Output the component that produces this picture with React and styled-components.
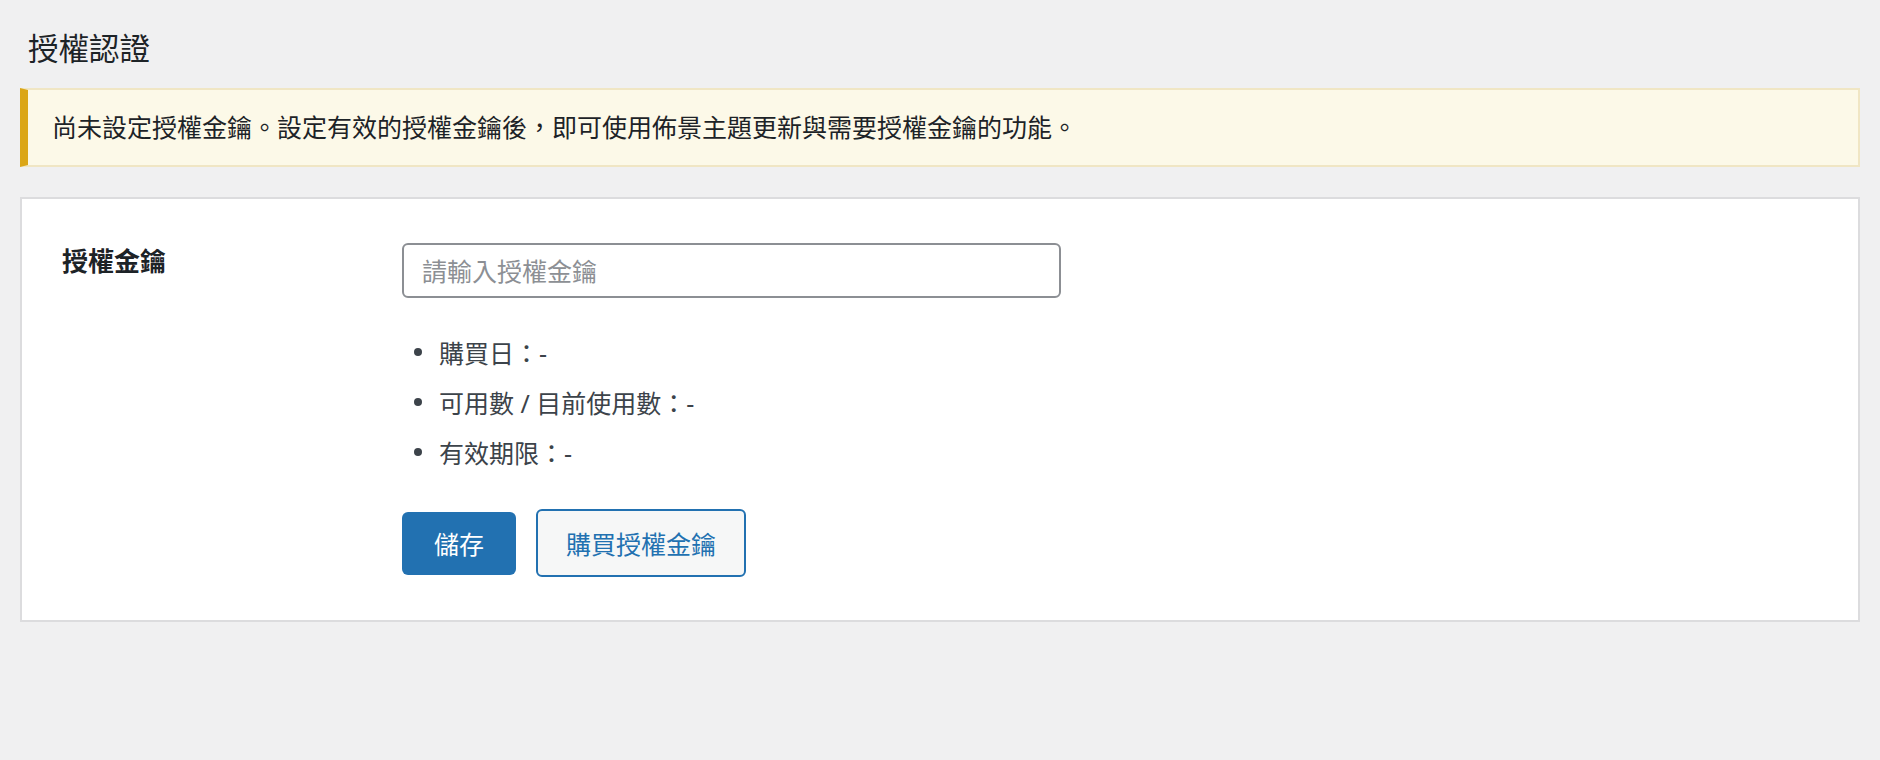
import React from 'react'
import styled, { createGlobalStyle } from 'styled-components'

const GlobalStyle = createGlobalStyle`
  html, body {
    margin: 0;
    padding: 0;
    background: #f0f0f1;
  }
  body {
    font-family: "Noto Sans", "Noto Sans CJK TC", sans-serif;
    color: #1d2327;
  }
  * { box-sizing: border-box; }
`

const Page = styled.div`
  padding: 28px 20px 40px;
  min-height: 760px;
`

const Title = styled.h1`
  margin: 0 0 20px;
  padding-left: 8px;
  font-size: 30.5px;
  font-weight: 400;
  line-height: 40px;
  color: #1d2327;
`

const Notice = styled.div`
  background: #fcf9e8;
  border: 2px solid #f0e6c4;
  border-left: 8px solid #dba617;
  padding: 19px 24px;
  font-size: 25px;
  line-height: 37px;
  color: #1d2327;
`

const Card = styled.div`
  margin-top: 30px;
  background: #fff;
  border: 2px solid #dcdcde;
  padding: 44px 40px 43px;
  display: grid;
  grid-template-columns: 340px 1fr;
`

const Label = styled.label`
  font-size: 26px;
  font-weight: 700;
  line-height: 37px;
  color: #1d2327;
`

const Field = styled.div`
  display: flex;
  flex-direction: column;
  align-items: flex-start;
`

const KeyInput = styled.input`
  width: 659px;
  height: 55px;
  border: 2px solid #8c8f94;
  border-radius: 6px;
  padding: 0 18px;
  font-family: inherit;
  font-size: 25px;
  color: #2c3338;
  background: #fff;
  outline: none;
  &::placeholder {
    color: #8c8f94;
  }
`

const InfoList = styled.ul`
  list-style: none;
  margin: 29px 0 0;
  padding: 0;
`

const InfoItem = styled.li`
  display: flex;
  align-items: center;
  height: 50px;
  font-size: 25px;
  color: #3c434a;
  &::before {
    content: '';
    width: 8px;
    height: 8px;
    border-radius: 50%;
    background: #3c434a;
    margin: 0 17px 0 12px;
  }
`

const Actions = styled.div`
  display: flex;
  align-items: center;
  gap: 20px;
  margin-top: 32px;
`

const Button = styled.button`
  font-family: inherit;
  font-size: 25px;
  border-radius: 6px;
  cursor: pointer;
  padding: ${props => (props.primary ? '0 32px' : '0 28px')};
  height: ${props => (props.primary ? '63px' : '68px')};
  background: ${props => (props.primary ? '#2271b1' : '#f6f7f7')};
  color: ${props => (props.primary ? '#fff' : '#2271b1')};
  border: ${props => (props.primary ? 'none' : '2px solid #2271b1')};
`

const details = [
  '購買日：-',
  '可用數 / 目前使用數：-',
  '有效期限：-'
]

export default function App() {
  return (
    <Page>
      <GlobalStyle />
      <Title>授權認證</Title>
      <Notice>尚未設定授權金鑰。設定有效的授權金鑰後，即可使用佈景主題更新與需要授權金鑰的功能。</Notice>
      <Card>
        <Label htmlFor="license-key">授權金鑰</Label>
        <Field>
          <KeyInput id="license-key" type="text" placeholder="請輸入授權金鑰" />
          <InfoList>
            {details.map(text => (
              <InfoItem key={text}>{text}</InfoItem>
            ))}
          </InfoList>
          <Actions>
            <Button primary>儲存</Button>
            <Button>購買授權金鑰</Button>
          </Actions>
        </Field>
      </Card>
    </Page>
  )
}
